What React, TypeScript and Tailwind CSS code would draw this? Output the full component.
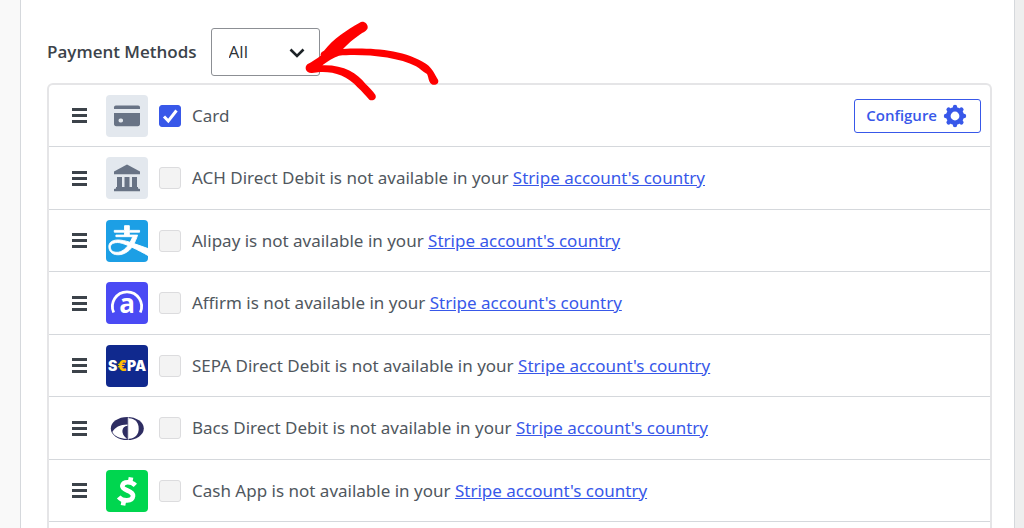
import React, { useState } from 'react';

const CardIcon = () => (
  <svg viewBox="0 0 42 42" className="w-full h-full" fill="#687385">
    <path d="M8 14v-1.500c0-1.100.7-1.900 1.800-1.900h22.400c1.100 0 1.800.8 1.800 1.900V14z" />
    <path fillRule="evenodd" d="M8 18h26v11c0 1.300-.9 2.200-2.200 2.200H10.200C8.900 31.200 8 30.300 8 29zM15.200 23.600h-.8a1.900 1.900 0 0 0 0 3.800h.8a1.900 1.900 0 0 0 0-3.800z" />
  </svg>
);

const BankIcon = () => (
  <svg viewBox="0 0 42 42" className="w-full h-full" fill="#687385">
    <path d="M21 7.600 34 14.600v2.700H8v-2.700z" />
    <path d="M11 20h5v10h-5zM18.500 20h5v10h-5zM26 20h5v10h-5z" />
    <path d="M10 30h22v1.500l2 .500v2.200H8V32l2-.500z" />
  </svg>
);

const AlipayIcon = () => (
  <svg viewBox="0 32 448 448" className="w-full h-full" fill="#fff">
    <path
      fillRule="evenodd"
      d="M448 410.400c-45.960-25.620-110.590-60.340-171.600-88.440-32.070 43.970-84.140 81-148.620 81-70.590 0-93.730-45.300-97.040-76.370-3.970-39.010 14.880-81.500 99.520-81.500 35.380 0 79.350 10.250 127.130 24.960 16.530-30.090 26.450-60.340 26.450-60.340h-178.200v-16.700h92.080v-31.240H88.280v-19.010h109.440V92.340h50.920v50.420h109.440v19.010H248.630v31.240h88.770s-15.210 46.620-38.350 90.920c48.930 16.700 100.010 36.040 148.950 52.740zM47.280 322.950c.990 20.170 10.250 53.730 69.930 53.730 52.070 0 92.580-39.680 117.870-72.900-44.630-18.680-84.480-31.410-109.440-31.410-67.450 0-79.350 33.060-78.360 50.580z"
      stroke="#fff"
      strokeWidth="10"
    />
  </svg>
);

const AffirmIcon = () => (
  <svg viewBox="0 0 42 42" className="w-full h-full">
    <path d="M7.700 30.500A14.600 14.600 0 1 1 34.300 30.500" fill="none" stroke="#fff" strokeWidth="2.800" />
    <text x="21" y="30.600" textAnchor="middle" fontSize="26" fontWeight="700" fontFamily="'Open Sans', sans-serif" fill="#fff">
      a
    </text>
  </svg>
);

const SepaIcon = () => (
  <svg viewBox="0 0 42 42" className="w-full h-full">
    <text x="21" y="26" textAnchor="middle" fontSize="14" fontWeight="900" fontFamily="Inter, 'Liberation Sans', sans-serif" fill="#fff">
      S<tspan fill="#ffbe00">€</tspan>PA
    </text>
  </svg>
);

const BacsIcon = () => (
  <svg viewBox="0 0 42 42" className="w-full h-full">
    <ellipse cx="21.300" cy="21.500" rx="16.500" ry="11.500" fill="#2e2d62" />
    <path d="M22.800 11.200c7 .3 9.900 4.800 9.900 10.300s-2.900 10-9.900 10.300z" fill="#fff" />
    <path d="M6.300 25c2.500-4.500 7.500-7.500 15.200-7.500v1.300c-6 .7-7.500 8-.5 13C14 31.700 8.500 29.500 6.300 25z" fill="#fff" />
    <path d="M22.300 10.500v22" stroke="#fff" strokeWidth="1" />
  </svg>
);

const CashAppIcon = () => (
  <svg viewBox="0 0 126 126" className="w-full h-full" fill="none" stroke="#fff">
    <path d="M88 46C76 34 52 33 49 47c-3 16 34 13 32 31-2 17-31 17-43 3" strokeWidth="14" />
    <path d="M75 22l-3 16M54 90l-3 16" strokeWidth="14" />
  </svg>
);

const GearIcon = () => (
  <svg viewBox="0 0 24 24" className="w-6 h-6" fill="none" stroke="currentColor">
    <circle cx="12" cy="12" r="6.700" strokeWidth="4.600" />
    {[0, 45, 90, 135, 180, 225, 270, 315].map((angle) => (
      <path key={angle} d="M12 3.700V3" strokeWidth="4.400" strokeLinecap="round" transform={`rotate(${angle} 12 12)`} />
    ))}
  </svg>
);

const methods = [
  { id: 'card', name: 'Card', icon: CardIcon, tile: 'bg-[#e3e8ee]', available: true },
  { id: 'ach', name: 'ACH Direct Debit', icon: BankIcon, tile: 'bg-[#e3e8ee]', available: false },
  { id: 'alipay', name: 'Alipay', icon: AlipayIcon, tile: 'bg-[#1c9fe5]', available: false },
  { id: 'affirm', name: 'Affirm', icon: AffirmIcon, tile: 'bg-[#4a4af4]', available: false },
  { id: 'sepa', name: 'SEPA Direct Debit', icon: SepaIcon, tile: 'bg-[#10298e]', available: false },
  { id: 'bacs', name: 'Bacs Direct Debit', icon: BacsIcon, tile: 'bg-white', available: false },
  { id: 'cashapp', name: 'Cash App', icon: CashAppIcon, tile: 'bg-[#00d64f]', available: false },
];

const MethodRow = ({ method }: { method: (typeof methods)[number] }) => {
  const [checked, setChecked] = useState(method.available);

  return (
    <li className="flex items-center h-[62px] even:h-[63px] pl-[23px] pr-[9px] border-b border-[#d5d8dc]">
      <button type="button" aria-label={`Reorder ${method.name}`} className="flex flex-col gap-[3px] w-[15px]">
        <span className="h-[3px] bg-[#3c434a]" />
        <span className="h-[3px] bg-[#3c434a]" />
        <span className="h-[3px] bg-[#3c434a]" />
      </button>
      <div className={`ml-[19px] size-[42px] shrink-0 rounded overflow-hidden ${method.tile}`}>
        <method.icon />
      </div>
      <div className="relative ml-[11px] size-[22px] shrink-0">
        <input
          id={method.id}
          type="checkbox"
          checked={checked}
          disabled={!method.available}
          onChange={(e) => setChecked(e.target.checked)}
          className="peer block size-[22px] appearance-none rounded-[3px] border border-[#dcdcde] bg-[#f3f3f3] checked:border-[#3858e9] checked:bg-[#3858e9]"
        />
        <svg viewBox="0 0 22 22" className="hidden peer-checked:block absolute inset-0 pointer-events-none" fill="none" stroke="#fff" strokeWidth="3">
          <path d="M5 11.500l4.300 4.500L17.500 5.500" />
        </svg>
      </div>
      <p className="ml-[11px] flex-1 font-['Noto_Sans',sans-serif] text-[17px] leading-6 text-[#50575e]">
        <label htmlFor={method.id}>{method.name}</label>
        {!method.available && (
          <>
            {' is not available in your '}
            <a href="#country" className="text-[#3858e9] underline">
              Stripe account's country
            </a>
          </>
        )}
      </p>
      {method.available && (
        <button type="button" className="flex items-center gap-[6px] h-[34px] pl-[11px] pr-[13px] rounded-[3px] border border-[#3858e9] bg-white text-[15px] font-semibold text-[#3858e9]">
          Configure
          <GearIcon />
        </button>
      )}
    </li>
  );
};

const App = () => {
  return (
    <div className="h-screen overflow-hidden bg-[#f9f9f9] pl-5 flex font-['Open_Sans',sans-serif]">
      <main className="flex-1 flex flex-col bg-white border-l border-r border-[#d5d8dc] pt-7 pl-[26px] pr-[22px]">
        <div className="flex items-center">
          <label htmlFor="filter" className="text-[17px] leading-6 font-semibold text-[#3c434a]">
            Payment Methods
          </label>
          <div className="relative ml-[14px]">
            <select id="filter" className="block appearance-none w-[109px] h-12 pl-[17px] rounded-[3px] border border-[#8c8f94] bg-white text-[17px] text-[#2c3338]">
              <option>All</option>
            </select>
            <svg viewBox="0 0 16 10" className="absolute right-[15px] top-5 w-4 h-[10px] pointer-events-none" fill="none" stroke="#1d2327" strokeWidth="2.600">
              <path d="M1.500 1.500L8 8l6.500-6.500" />
            </svg>
            <svg viewBox="312 27 414 252" className="absolute left-[93px] -top-[9px] w-[138px] h-[84px] max-w-none pointer-events-none" fill="#fe0000">
              <path d="M322 163C338 154 350 146 362 137Q360 127 372 122C400 86 440 60 479 38C489 31 505 40 503 54C501 62 490 67 481 73C462 86 443 102 429 117C500 113 610 116 679 162C696 174 702 189 714 209C719 221 704 229 694 222C685 215 686 201 681 192C667 185 660 176 648 169C590 138 480 131 417 137C400 142 382 154 367 166C430 164 470 188 497 222C507 232 519 243 526 254C532 266 518 275 508 269C498 257 486 244 474 233C442 196 400 184 360 186L336 189C317 190 312 172 322 163Z" />
            </svg>
          </div>
        </div>
        <ul className="mt-[7px] flex-1 border-2 border-b-0 border-[#e5e5e7] rounded-t-md">
          {methods.map((method) => (
            <MethodRow key={method.id} method={method} />
          ))}
        </ul>
      </main>
      <div className="w-[9px] bg-[#eeeeee]" />
    </div>
  );
};

export default App;
